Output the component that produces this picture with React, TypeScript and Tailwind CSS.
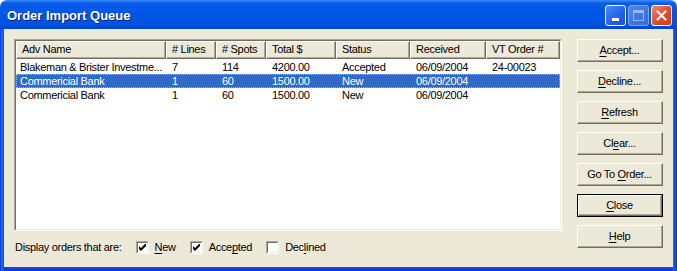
import React from 'react';

interface Row {
  name: string;
  lines: string;
  spots: string;
  total: string;
  status: string;
  received: string;
  order: string;
  selected?: boolean;
}

const columns = [
  { label: 'Adv Name', w: 'w-[150px]' },
  { label: '# Lines', w: 'w-[50px]' },
  { label: '# Spots', w: 'w-[50px]' },
  { label: 'Total $', w: 'w-[70px]' },
  { label: 'Status', w: 'w-[74px]' },
  { label: 'Received', w: 'w-[76px]' },
  { label: 'VT Order #', w: 'w-[74px]' },
];

const rows: Row[] = [
  { name: 'Blakeman & Brister Investme...', lines: '7', spots: '114', total: '4200.00', status: 'Accepted', received: '06/09/2004', order: '24-00023' },
  { name: 'Commericial Bank', lines: '1', spots: '60', total: '1500.00', status: 'New', received: '06/09/2004', order: '', selected: true },
  { name: 'Commericial Bank', lines: '1', spots: '60', total: '1500.00', status: 'New', received: '06/09/2004', order: '' },
];

// label with the mnemonic letter underlined
function Mn({ text, at }: { text: string; at: number }) {
  return (
    <span>
      {text.slice(0, at)}
      <span className="underline underline-offset-[2px]">{text[at]}</span>
      {text.slice(at + 1)}
    </span>
  );
}

function Button({ text, at, isDefault }: { text: string; at: number; isDefault?: boolean }) {
  return (
    <div className={`h-[23px] w-[86px] ${isDefault ? 'border border-black' : ''}`}>
      <div className="h-full w-full border-t border-l border-white border-b border-r border-b-[#716F64] border-r-[#716F64] bg-[#ECE9D8]">
        <div className="h-full w-full border-b border-r border-b-[#ACA899] border-r-[#ACA899] flex items-center justify-center text-[11px] text-black">
          <Mn text={text} at={at} />
        </div>
      </div>
    </div>
  );
}

function Check({ checked, text, at }: { checked: boolean; text: string; at: number }) {
  return (
    <div className="flex items-center gap-[6px]">
      <div className="w-[13px] h-[13px] border-t border-l border-[#ACA899] border-b border-r border-b-white border-r-white">
        <div className="w-full h-full border-t border-l border-[#716F64] border-b border-r border-b-[#F1EFE2] border-r-[#F1EFE2] bg-white flex items-center justify-center">
          {checked && (
            <svg width="7" height="7" viewBox="0 0 7 7">
              <path d="M0 2 L0 5 L2 7 L7 2 L7 -1 L2 4 Z" fill="#000" />
            </svg>
          )}
        </div>
      </div>
      <Mn text={text} at={at} />
    </div>
  );
}

export default function App() {
  return (
    <div className="w-[677px] h-[271px] flex flex-col text-[11px] tracking-[-0.3px] text-black" style={{ fontFamily: '"Liberation Sans", Arial, sans-serif' }}>
      {/* title bar */}
      <div className="h-[29px] shrink-0 rounded-t-[7px] flex items-center pl-[7px] pr-[5px] bg-[linear-gradient(to_bottom,#3d8ffb_0%,#0a5de9_10%,#0256e6_45%,#0053e3_80%,#0443cf_100%)]">
        <span className="text-white font-bold text-[13px] tracking-normal mt-[3px] [text-shadow:1px_1px_0_#0a1e7a]">
          Order Import Queue
        </span>
        <div className="ml-auto flex gap-[2px] mt-[1px]">
          <div className="w-[21px] h-[21px] rounded-[3px] border border-white bg-[linear-gradient(135deg,#4a8cf6,#2361e3_60%,#1a4fd1)] flex items-end justify-center pb-[4px]">
            <div className="w-[7px] h-[3px] bg-white" />
          </div>
          <div className="w-[21px] h-[21px] rounded-[3px] border border-[#7ea7f0] bg-[linear-gradient(135deg,#4f86ea,#3568dc)] flex items-center justify-center">
            <div className="w-[11px] h-[11px] border border-[#9ab9f2] border-t-[3px]" />
          </div>
          <div className="w-[21px] h-[21px] rounded-[3px] border border-white bg-[linear-gradient(135deg,#ec8c6c,#dc4d28_55%,#c93d17)] flex items-center justify-center">
            <svg width="11" height="11" viewBox="0 0 11 11">
              <path d="M1.5 1.5 L9.5 9.5 M9.5 1.5 L1.5 9.5" stroke="#fff" strokeWidth="2" strokeLinecap="square" />
            </svg>
          </div>
        </div>
      </div>

      {/* frame + body */}
      <div className="flex-1 flex bg-[#0831D9]">
        <div className="w-[4px] bg-[linear-gradient(to_right,#0831d9,#166aee_40%,#0855dd)]" />
        <div className="flex-1 flex flex-col">
          <div className="flex-1 bg-[#ECE9D8] flex pt-[10px] pl-[10px] gap-[15px]">
            <div className="flex flex-col w-[548px]">
              {/* list view */}
              <div className="h-[192px] border-t border-l border-[#ACA899] border-b border-r border-b-white border-r-white">
                <div className="h-full border-t border-l border-[#716F64] border-b border-r border-b-[#F1EFE2] border-r-[#F1EFE2] bg-white">
                  <div className="flex h-[18px]">
                    {columns.map((c) => (
                      <div key={c.label} className={`${c.w} h-full border-t border-l border-white border-b border-r border-b-[#716F64] border-r-[#716F64] bg-[#ECE9D8]`}>
                        <div className="h-full border-b border-r border-b-[#ACA899] border-r-[#ACA899] flex items-center pl-[5px] whitespace-nowrap">
                          {c.label}
                        </div>
                      </div>
                    ))}
                  </div>
                  <div className="pt-[1px]">
                    {rows.map((r, i) => (
                      <div
                        key={i}
                        className={`flex h-[14px] items-center whitespace-nowrap ${r.selected ? 'bg-[#316AC5] text-white outline outline-1 outline-dotted outline-[#d7b45a] -outline-offset-1' : ''}`}
                      >
                        <div className="w-[150px] pl-[4px]">{r.name}</div>
                        <div className="w-[50px] pl-[6px]">{r.lines}</div>
                        <div className="w-[50px] pl-[6px]">{r.spots}</div>
                        <div className="w-[70px] pl-[6px]">{r.total}</div>
                        <div className="w-[74px] pl-[6px]">{r.status}</div>
                        <div className="w-[76px] pl-[6px]">{r.received}</div>
                        <div className="w-[74px] pl-[6px]">{r.order}</div>
                      </div>
                    ))}
                  </div>
                </div>
              </div>
              {/* filter row */}
              <div className="flex items-center mt-[10px] pl-[1px] h-[13px]">
                <span className="mr-[14px]">Display orders that are:</span>
                <div className="flex gap-[14px]">
                  <Check checked text="New" at={0} />
                  <Check checked text="Accepted" at={4} />
                  <Check checked={false} text="Declined" at={3} />
                </div>
              </div>
            </div>
            {/* buttons */}
            <div className="flex flex-col gap-[8px]">
              <Button text="Accept..." at={0} />
              <Button text="Decline..." at={0} />
              <Button text="Refresh" at={0} />
              <Button text="Clear..." at={2} />
              <Button text="Go To Order..." at={6} />
              <Button text="Close" at={0} isDefault />
              <Button text="Help" at={0} />
            </div>
          </div>
          <div className="h-[4px] bg-[linear-gradient(to_bottom,#0855dd,#0831d9)]" />
        </div>
        <div className="w-[4px] bg-[linear-gradient(to_left,#0831d9,#0855dd_50%,#166aee)]" />
      </div>
    </div>
  );
}
